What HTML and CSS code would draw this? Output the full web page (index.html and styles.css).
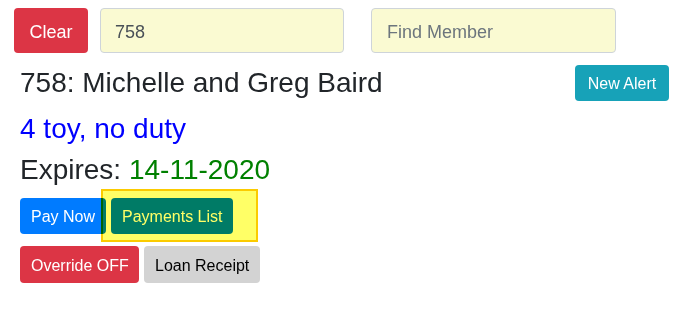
FILE: index.html
```html
<!DOCTYPE html>
<html>
<head>
<meta charset="utf-8">
<link rel="stylesheet" href="styles.css">
</head>
<body>
<div class="page">
  <div class="search-row">
    <button class="btn btn-clear">Clear</button>
    <input class="field field-num" type="text" value="758">
    <input class="field field-find" type="text" placeholder="Find Member">
  </div>
  <div class="member">
    <div class="title-row">
      <h3 class="title">758: Michelle and Greg Baird</h3>
      <button class="btn btn-info">New Alert</button>
    </div>
    <div class="line line-blue">4 toy, no duty</div>
    <div class="line line-expires">Expires: <span class="green">14-11-2020</span></div>
    <div class="btn-row btn-row-pay">
      <button class="btn btn-primary btn-pay">Pay Now</button>
      <button class="btn btn-primary btn-list">Payments List</button>
      <div class="highlight"></div>
    </div>
    <div class="btn-row btn-row-loan">
      <button class="btn btn-danger btn-override">Override OFF</button>
      <button class="btn btn-grey btn-receipt">Loan Receipt</button>
    </div>
  </div>
</div>
</body>
</html>
```

FILE: styles.css
```css
* { box-sizing: border-box; }
html, body { margin: 0; padding: 0; background: #fff; }
body {
  font-family: "Liberation Sans", Arial, sans-serif;
  color: #212529;
  width: 684px;
  height: 336px;
  overflow: hidden;
}
.page { padding: 8px 0 0 0; }

.search-row {
  display: flex;
  align-items: flex-start;
  padding-left: 14px;
  height: 45px;
}
.btn {
  font-family: "Liberation Sans", Arial, sans-serif;
  font-size: 16px;
  border: none;
  border-radius: 4px;
  color: #fff;
  padding: 2px 11px 0 11px;
  height: 36px;
  line-height: 34px;
  cursor: pointer;
  white-space: nowrap;
}
.btn-clear {
  background: #dc3545;
  font-size: 18px;
  width: 74px;
  height: 45px;
  line-height: 41px;
  padding: 4px 0 0 0;
}
.field {
  height: 45px;
  width: 244px;
  margin-left: 12px;
  background: #fafad2;
  border: 1px solid #ced4da;
  border-radius: 4px;
  font-family: "Liberation Sans", Arial, sans-serif;
  font-size: 18px;
  color: #495057;
  padding: 4px 14px 0 14px;
  outline: none;
}
.field-find {
  margin-left: 27px;
  width: 245px;
  padding-left: 15px;
}
.field::placeholder { color: #6c757d; opacity: 1; }

.member { padding: 0 15px 0 20px; }
.title-row {
  display: flex;
  justify-content: space-between;
  align-items: center;
  height: 36px;
  margin-top: 12px;
}
.title {
  margin: 0;
  font-size: 28px;
  font-weight: normal;
  line-height: 34px;
  color: #212529;
}
.btn-info { background: #17a2b8; width: 94px; }

.line {
  font-size: 28px;
  line-height: 34px;
  height: 34px;
  color: #212529;
}
.line-blue { color: #0000ff; margin-top: 11px; }
.line-expires { margin-top: 7px; }
.green { color: #008000; }

.btn-row {
  position: relative;
  display: flex;
  gap: 5px;
  height: 36px;
}
.btn-row-pay { margin-top: 11px; }
.btn-row-loan { margin-top: 12px; height: 37px; }
.btn-row-loan .btn { height: 37px; line-height: 35px; }
.btn-primary { background: #007bff; }
.btn-pay { width: 86px; }
.btn-list { width: 122px; }
.btn-danger { background: #dc3545; }
.btn-override { width: 119px; }
.btn-grey { background: #d3d3d3; color: #000; }
.btn-receipt { width: 116px; }

.highlight {
  position: absolute;
  left: 81px;
  top: -9px;
  width: 157px;
  height: 53px;
  background: #ffff66;
  border: 2px solid #fbcb00;
  mix-blend-mode: multiply;
  pointer-events: none;
}
```
